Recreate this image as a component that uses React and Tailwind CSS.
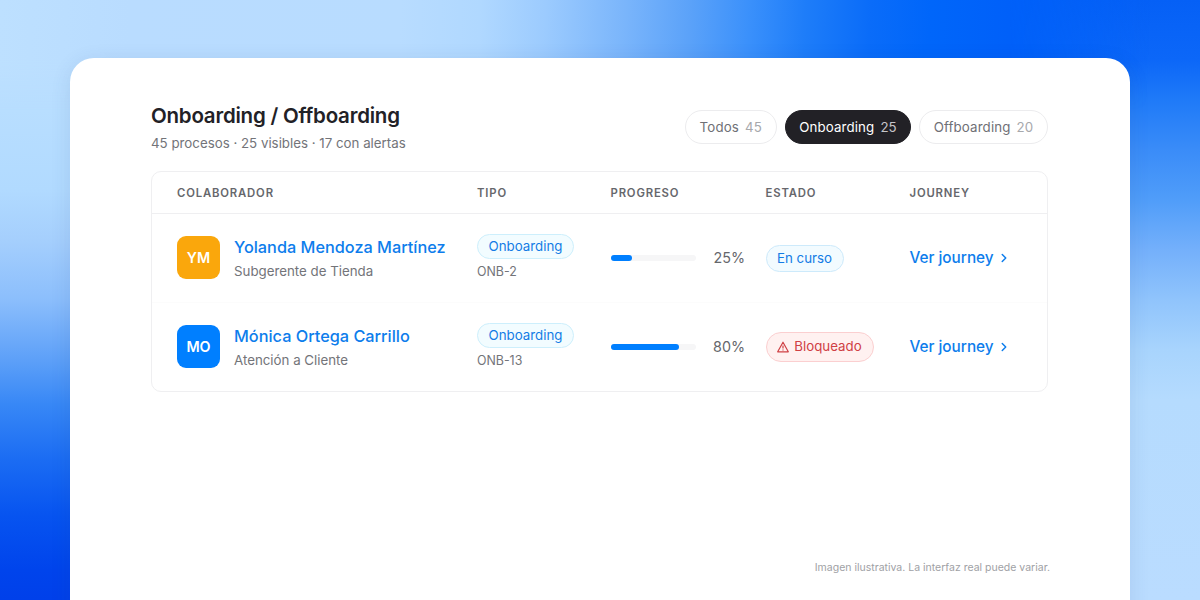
import { ChevronRight } from "lucide-react";

const filters = [
  { label: "Todos", count: 45, width: "w-[92.5px]" },
  { label: "Onboarding", count: 25, width: "w-[126px]", active: true },
  { label: "Offboarding", count: 20, width: "w-[129px]" },
];

const rows = [
  {
    initials: "YM",
    color: "bg-[#faa70c]",
    name: "Yolanda Mendoza Martínez",
    role: "Subgerente de Tienda",
    code: "ONB-2",
    progress: 25,
  },
  {
    initials: "MO",
    color: "bg-[#007fff]",
    name: "Mónica Ortega Carrillo",
    role: "Atención a Cliente",
    code: "ONB-13",
    progress: 80,
    blocked: true,
  },
];

function Filter({ label, count, width, active }) {
  return (
    <button
      className={`${width} flex h-[34px] items-center justify-center gap-1.5 rounded-full border pt-px text-[13.3px] tracking-[0.01em] ${active ? "border-[#222126] bg-[#222126] text-white" : "border-[#ececee] bg-white text-[#6f7076]"}`}
    >
      {label}
      <span className={active ? "text-[#c5c5c9]" : "text-[#a7a8ac]"}>{count}</span>
    </button>
  );
}

function Warning() {
  return (
    <svg width="12" height="12" viewBox="0 0 12 12" fill="none" stroke="currentColor" strokeWidth="1.2" strokeLinejoin="round">
      <path d="M6 1.2 11.3 10.8H.7Z" />
      <path d="M6 4.6v3M6 8.5v1" />
    </svg>
  );
}

function Status({ blocked }) {
  if (blocked) {
    return (
      <span className="flex h-[30px] w-[108px] items-center justify-center gap-[5px] rounded-full border border-[#fbcfd0] bg-[#fff1f0] text-[13.3px] text-[#cf4044]">
        <Warning />
        <span className="pt-px">Bloqueado</span>
      </span>
    );
  }
  return (
    <span className="mt-px flex h-[27px] w-[78px] items-center justify-center rounded-full border border-[#cdeafb] bg-[#f2fbff] pt-px text-[13.3px] text-[#147ce5]">
      En curso
    </span>
  );
}

function Row({ row }) {
  return (
    <div className="grid h-[88.5px] grid-cols-[300px_133.5px_155px_144px_1fr] items-center border-b border-[#fcfcfc] pl-[25px] last:border-0">
      <div className="flex items-center gap-[14px]">
        <div className={`${row.color} flex size-[43px] items-center justify-center rounded-[9px] text-[14.3px] font-semibold text-white`}>
          {row.initials}
        </div>
        <div className="pt-[2px]">
          <div className="text-[16.3px] leading-[25px] font-medium whitespace-nowrap text-[#0d7dec]">{row.name}</div>
          <div className="text-[13.3px] leading-[23px] text-[#737479]">{row.role}</div>
        </div>
      </div>
      <div className="flex flex-col items-start">
        <span className="flex h-[25px] w-[97px] items-center justify-center rounded-full border border-[#cdeffc] bg-[#f2fcff] pt-px text-[13.3px] text-[#147ce5]">
          Onboarding
        </span>
        <span className="pt-[3px] text-[12.4px] leading-5 text-[#737479]">{row.code}</span>
      </div>
      <div className="flex items-center">
        <div className="h-1.5 w-[85px] rounded-full bg-[#f6f6f7]">
          <div className="h-full rounded-full bg-[#007fff]" style={{ width: `${row.progress}%` }} />
        </div>
        <span className="w-[49.5px] text-right text-[14.3px] text-[#66676c]">{row.progress}%</span>
      </div>
      <Status blocked={row.blocked} />
      <a className="flex items-center gap-[3px] pt-px text-[15.3px] font-medium text-[#0d7dec]">
        Ver journey
        <ChevronRight size={14} strokeWidth={2.5} />
      </a>
    </div>
  );
}

export default function App() {
  return (
    <div className="relative h-[600px] w-[1200px] overflow-hidden bg-[linear-gradient(180deg,#bce0ff_0px,#b8deff_110px,#b1daff_190px,#a5cffd_240px,#8bbefc_300px,#5da0f8_360px,#3787f6_405px,#1b6cf3_460px,#0754f0_515px,#0044ec_570px,#0040ea_600px)] font-['Inter',sans-serif]">
      <div className="absolute inset-y-0 right-0 w-[600px] bg-[linear-gradient(180deg,#0560f6_0px,#0c67f8_60px,#1f7af8_100px,#3a8cf8_150px,#509df9_200px,#74b0fb_250px,#90c4fc_300px,#a8d4fd_350px,#b5dbfe_400px,#badcff_600px)]" />
      {/* horizontal band behind the card's top edge, faded into the side columns */}
      <div className="absolute inset-x-0 top-0 h-[110px] bg-[linear-gradient(92deg,#bde0ff_0px,#b9dcff_130px,#b8dcff_400px,#b0d8ff_480px,#9ccbfe_545px,#7ab5fb_625px,#5ba2f9_690px,#3a90fb_750px,#1e7df9_805px,#0a6cf9_870px,#0066fa_930px,#0060f9_1010px,#0060f900_1150px)] mask-[linear-gradient(180deg,black_55%,transparent)]" />
      <main className="absolute top-[58px] left-[70px] h-[600px] w-[1060px] rounded-[24px] bg-white pt-[42px] pr-[82px] pl-[81px] shadow-[0_4px_20px_rgba(40,70,120,0.12)]">
        <header className="flex h-[71px] justify-between">
          <div>
            <h1 className="pt-px text-[20.5px] leading-[30px] font-semibold tracking-[-0.011em] text-[#222126]">Onboarding / Offboarding</h1>
            <p className="pt-[2px] text-[13.3px] leading-5 text-[#737479]">45 procesos · 25 visibles · 17 con alertas</p>
          </div>
          <div className="flex gap-2 pt-[10px]">
            {filters.map((f) => (
              <Filter key={f.label} {...f} />
            ))}
          </div>
        </header>
        <section className="h-[220.5px] rounded-[10px] border border-[#efeff1]">
          <div className="grid h-[42px] grid-cols-[300px_133.5px_155px_144px_1fr] items-center border-b border-[#efeff1] pt-px pl-[25px] text-[11.3px] font-semibold tracking-[0.075em] text-[#66676c]">
            <span>COLABORADOR</span>
            <span>TIPO</span>
            <span>PROGRESO</span>
            <span>ESTADO</span>
            <span>JOURNEY</span>
          </div>
          {rows.map((row) => (
            <Row key={row.code} row={row} />
          ))}
        </section>
        <p className="mt-[168px] -mr-[2px] text-right text-[10.5px] leading-4 text-[#a0a1a5]">
          Imagen ilustrativa. La interfaz real puede variar.
        </p>
      </main>
    </div>
  );
}
